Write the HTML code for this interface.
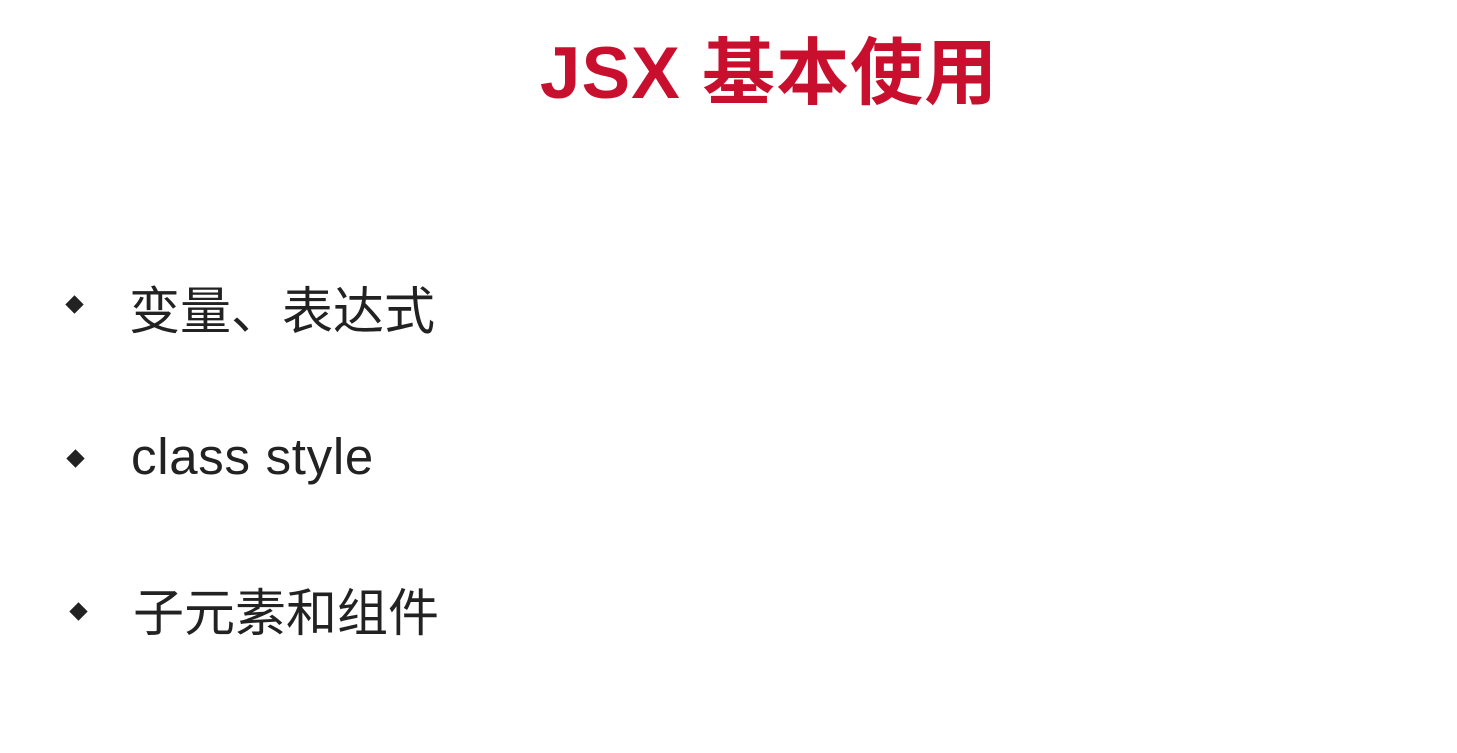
<!DOCTYPE html>
<html><head><meta charset="utf-8"><style>
html,body{margin:0;padding:0;width:1457px;height:753px;background:#fff;overflow:hidden}
.t{position:absolute;left:0;width:1538px;top:14px;text-align:center;font:bold 73px "Liberation Sans","Noto Sans CJK SC",sans-serif;color:#c8102e;letter-spacing:1px}
.i{position:absolute;font:51px "Liberation Sans","Noto Sans CJK SC",sans-serif;color:#222;white-space:nowrap}
.d{position:absolute;width:13px;height:13px;background:#222;transform:rotate(45deg)}
</style></head><body>
<div class="t">JSX 基本使用</div>
<div class="d" style="left:68px;top:298px"></div>
<div class="i" style="left:129px;top:270px">变量、表达式</div>
<div class="d" style="left:69px;top:452px"></div>
<div class="i" style="left:131px;top:427px;letter-spacing:0.7px">class style</div>
<div class="d" style="left:72px;top:605px"></div>
<div class="i" style="left:133px;top:572px">子元素和组件</div>
</body></html>
